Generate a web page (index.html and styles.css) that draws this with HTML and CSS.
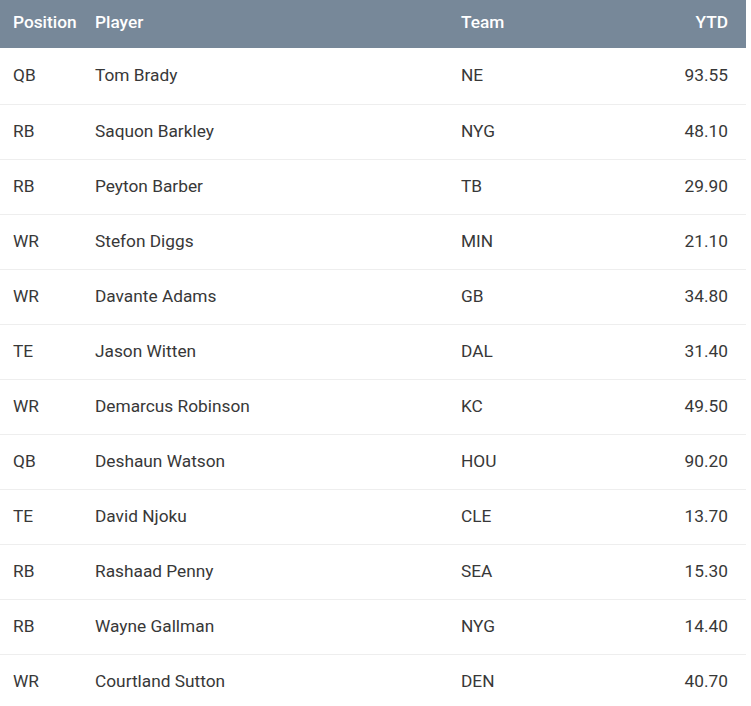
FILE: index.html
```html
<!DOCTYPE html>
<html>
<head>
<meta charset="utf-8">
<link rel="stylesheet" href="styles.css">
</head>
<body>
<table class="players">
  <colgroup>
    <col class="c-pos"><col class="c-player"><col class="c-team"><col class="c-ytd">
  </colgroup>
  <thead>
    <tr><th>Position</th><th>Player</th><th>Team</th><th class="num">YTD</th></tr>
  </thead>
  <tbody>
    <tr><td>QB</td><td>Tom Brady</td><td>NE</td><td class="num">93.55</td></tr>
    <tr><td>RB</td><td>Saquon Barkley</td><td>NYG</td><td class="num">48.10</td></tr>
    <tr><td>RB</td><td>Peyton Barber</td><td>TB</td><td class="num">29.90</td></tr>
    <tr><td>WR</td><td>Stefon Diggs</td><td>MIN</td><td class="num">21.10</td></tr>
    <tr><td>WR</td><td>Davante Adams</td><td>GB</td><td class="num">34.80</td></tr>
    <tr><td>TE</td><td>Jason Witten</td><td>DAL</td><td class="num">31.40</td></tr>
    <tr><td>WR</td><td>Demarcus Robinson</td><td>KC</td><td class="num">49.50</td></tr>
    <tr><td>QB</td><td>Deshaun Watson</td><td>HOU</td><td class="num">90.20</td></tr>
    <tr><td>TE</td><td>David Njoku</td><td>CLE</td><td class="num">13.70</td></tr>
    <tr><td>RB</td><td>Rashaad Penny</td><td>SEA</td><td class="num">15.30</td></tr>
    <tr><td>RB</td><td>Wayne Gallman</td><td>NYG</td><td class="num">14.40</td></tr>
    <tr><td>WR</td><td>Courtland Sutton</td><td>DEN</td><td class="num">40.70</td></tr>
  </tbody>
</table>
</body>
</html>
```
FILE: styles.css
```css
html, body {
  margin: 0;
  padding: 0;
  background: #fff;
}
body {
  font-family: Roboto, "Liberation Sans", sans-serif;
  font-size: 17.3px;
  color: #383838;
}
.players {
  width: 746px;
  border-collapse: collapse;
  table-layout: fixed;
}
.c-pos { width: 82px; }
.c-player { width: 366px; }
.c-team { width: 150px; }
.c-ytd { width: 148px; }
.players th {
  background: #778899;
  color: #fff;
  font-weight: 500;
  text-align: left;
  height: 48px;
  padding: 0 0 4px 13px;
  box-sizing: border-box;
  vertical-align: middle;
}
.players td {
  height: 55px;
  padding: 0 0 2px 13px;
  box-sizing: border-box;
  border-bottom: 1px solid #eee;
  vertical-align: middle;
}
.players tbody tr:first-child td {
  height: 56px;
}
.players .num {
  text-align: right;
  padding-right: 18px;
}
```
